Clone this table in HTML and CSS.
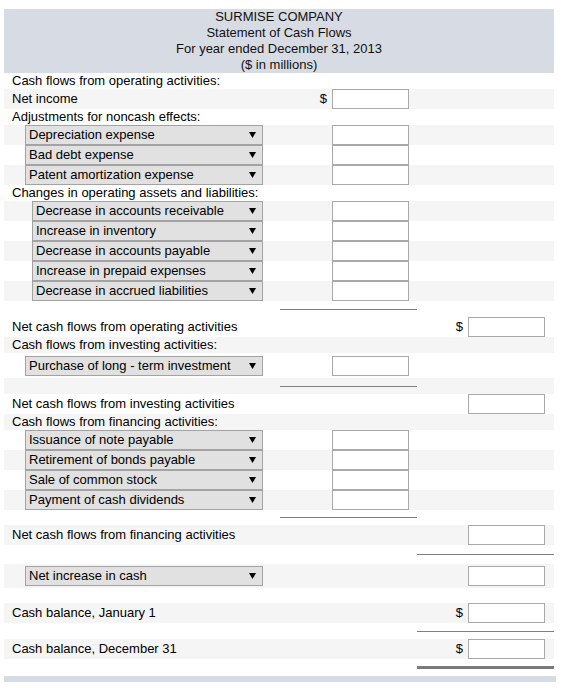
FILE: index.html
```html
<!DOCTYPE html>
<html>
<head>
<meta charset="utf-8">
<link rel="stylesheet" href="styles.css">
</head>
<body>
<div class="sheet">
  <div class="head">
    <div>SURMISE COMPANY</div>
    <div>Statement of Cash Flows</div>
    <div>For year ended December 31, 2013</div>
    <div>($ in millions)</div>
  </div>

  <div class="row h16"><div class="lbl">Cash flows from operating activities:</div><div></div><div></div></div>
  <div class="row g"><div class="lbl">Net income</div><div class="c1"><span class="dollar">$</span><input class="box" type="text"></div><div></div></div>
  <div class="row h16"><div class="lbl">Adjustments for noncash effects:</div><div></div><div></div></div>
  <div class="row g"><div><div class="sel"><span>Depreciation expense</span><svg class="arr" width="7" height="6" viewBox="0 0 7 6"><polygon points="0,0 7,0 3.5,6" fill="#000"/></svg></div></div><div class="c1"><input class="box" type="text"></div><div></div></div>
  <div class="row"><div><div class="sel"><span>Bad debt expense</span><svg class="arr" width="7" height="6" viewBox="0 0 7 6"><polygon points="0,0 7,0 3.5,6" fill="#000"/></svg></div></div><div class="c1"><input class="box" type="text"></div><div></div></div>
  <div class="row g"><div><div class="sel"><span>Patent amortization expense</span><svg class="arr" width="7" height="6" viewBox="0 0 7 6"><polygon points="0,0 7,0 3.5,6" fill="#000"/></svg></div></div><div class="c1"><input class="box" type="text"></div><div></div></div>
  <div class="row h16"><div class="lbl">Changes in operating assets and liabilities:</div><div></div><div></div></div>
  <div class="row g"><div><div class="sel l2"><span>Decrease in accounts receivable</span><svg class="arr" width="7" height="6" viewBox="0 0 7 6"><polygon points="0,0 7,0 3.5,6" fill="#000"/></svg></div></div><div class="c1"><input class="box" type="text"></div><div></div></div>
  <div class="row"><div><div class="sel l2"><span>Increase in inventory</span><svg class="arr" width="7" height="6" viewBox="0 0 7 6"><polygon points="0,0 7,0 3.5,6" fill="#000"/></svg></div></div><div class="c1"><input class="box" type="text"></div><div></div></div>
  <div class="row g"><div><div class="sel l2"><span>Decrease in accounts payable</span><svg class="arr" width="7" height="6" viewBox="0 0 7 6"><polygon points="0,0 7,0 3.5,6" fill="#000"/></svg></div></div><div class="c1"><input class="box" type="text"></div><div></div></div>
  <div class="row"><div><div class="sel l2"><span>Increase in prepaid expenses</span><svg class="arr" width="7" height="6" viewBox="0 0 7 6"><polygon points="0,0 7,0 3.5,6" fill="#000"/></svg></div></div><div class="c1"><input class="box" type="text"></div><div></div></div>
  <div class="row g"><div><div class="sel l2"><span>Decrease in accrued liabilities</span><svg class="arr" width="7" height="6" viewBox="0 0 7 6"><polygon points="0,0 7,0 3.5,6" fill="#000"/></svg></div></div><div class="c1"><input class="box" type="text"></div><div></div></div>
  <div class="row h16"><div></div><div class="rule"></div><div></div></div>
  <div class="row"><div class="lbl">Net cash flows from operating activities</div><div></div><div class="c2"><span class="dollar">$</span><input class="box" type="text"></div></div>

  <div class="row h16 g"><div class="lbl">Cash flows from investing activities:</div><div></div><div></div></div>
  <div class="row h25"><div><div class="sel"><span>Purchase of long - term investment</span><svg class="arr" width="7" height="6" viewBox="0 0 7 6"><polygon points="0,0 7,0 3.5,6" fill="#000"/></svg></div></div><div class="c1"><input class="box" type="text"></div><div></div></div>
  <div class="row h16 g"><div></div><div class="rule"></div><div></div></div>
  <div class="row"><div class="lbl">Net cash flows from investing activities</div><div></div><div class="c2"><input class="box" type="text"></div></div>

  <div class="row h16 g"><div class="lbl">Cash flows from financing activities:</div><div></div><div></div></div>
  <div class="row"><div><div class="sel"><span>Issuance of note payable</span><svg class="arr" width="7" height="6" viewBox="0 0 7 6"><polygon points="0,0 7,0 3.5,6" fill="#000"/></svg></div></div><div class="c1"><input class="box" type="text"></div><div></div></div>
  <div class="row g"><div><div class="sel"><span>Retirement of bonds payable</span><svg class="arr" width="7" height="6" viewBox="0 0 7 6"><polygon points="0,0 7,0 3.5,6" fill="#000"/></svg></div></div><div class="c1"><input class="box" type="text"></div><div></div></div>
  <div class="row"><div><div class="sel"><span>Sale of common stock</span><svg class="arr" width="7" height="6" viewBox="0 0 7 6"><polygon points="0,0 7,0 3.5,6" fill="#000"/></svg></div></div><div class="c1"><input class="box" type="text"></div><div></div></div>
  <div class="row g"><div><div class="sel"><span>Payment of cash dividends</span><svg class="arr" width="7" height="6" viewBox="0 0 7 6"><polygon points="0,0 7,0 3.5,6" fill="#000"/></svg></div></div><div class="c1"><input class="box" type="text"></div><div></div></div>
  <div class="row h15"><div></div><div class="rule"></div><div></div></div>
  <div class="row g"><div class="lbl">Net cash flows from financing activities</div><div></div><div class="c2"><input class="box" type="text"></div></div>
  <div class="row h19"><div></div><div></div><div class="rule"></div></div>

  <div class="row h24 g"><div><div class="sel"><span>Net increase in cash</span><svg class="arr" width="7" height="6" viewBox="0 0 7 6"><polygon points="0,0 7,0 3.5,6" fill="#000"/></svg></div></div><div></div><div class="c2"><input class="box" type="text"></div></div>
  <div class="row h15"><div></div><div></div><div></div></div>
  <div class="row g"><div class="lbl">Cash balance, January 1</div><div></div><div class="c2"><span class="dollar">$</span><input class="box" type="text"></div></div>
  <div class="row h16"><div></div><div></div><div class="rule"></div></div>
  <div class="row g"><div class="lbl">Cash balance, December 31</div><div></div><div class="c2"><span class="dollar">$</span><input class="box" type="text"></div></div>
  <div class="row h17"><div></div><div></div><div class="rule thick"></div></div>
  <div class="foot"></div>
</div>
</body>
</html>
```

FILE: styles.css
```css
html, body {
  margin: 0;
  padding: 0;
  background: #fff;
}

body {
  font-family: "Liberation Sans", Arial, sans-serif;
  font-size: 13px;
  color: #000;
}

.sheet {
  width: 550px;
  padding: 9px 0 0 4px;
}

.head {
  background: #d7dce4;
  height: 64px;
  text-align: center;
  line-height: 16px;
  color: #111;
}

.row {
  display: grid;
  grid-template-columns: 276px 137px 137px;
  height: 20px;
  align-items: center;
  line-height: 16px;
}

.row.g { background: #f5f5f5; }
.h15 { height: 15px; }
.h16 { height: 16px; }
.h17 { height: 17px; }
.h19 { height: 19px; }
.h24 { height: 24px; }
.h25 { height: 25px; }

.lbl {
  padding-left: 8px;
  white-space: nowrap;
}

.c1, .c2 {
  display: flex;
  justify-content: flex-end;
  align-items: center;
  height: 100%;
}

.c1 { padding-right: 8px; }
.c2 { padding-right: 9px; }

.dollar {
  margin-right: 5px;
}

.box {
  box-sizing: border-box;
  width: 77px;
  height: 20px;
  margin: 0;
  padding: 0 3px;
  border: 1px solid #a9a9a9;
  background: #fff;
  font: inherit;
  outline: none;
}

.sel {
  box-sizing: border-box;
  margin-left: 21px;
  width: 238px;
  height: 20px;
  border: 1px solid #a3a3a3;
  background: #e1e1e1;
  display: flex;
  align-items: center;
  justify-content: space-between;
  padding: 0 6px 0 3px;
  white-space: nowrap;
  color: #000;
}

.sel.l2 {
  margin-left: 28px;
  width: 231px;
}

.arr {
  display: block;
  flex: none;
}

.rule {
  align-self: center;
  border-top: 1px solid #808080;
  height: 0;
}

.rule.thick {
  border-top: 3px solid #7a7a7a;
}

.foot {
  background: #d7dce4;
  height: 6px;
  width: 552px;
}
```
